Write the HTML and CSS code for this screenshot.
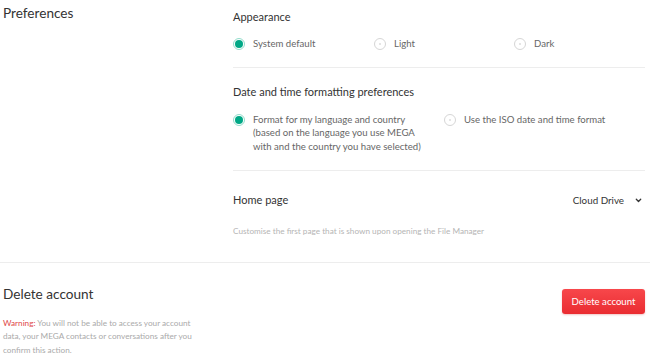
FILE: index.html
```html
<!DOCTYPE html>
<html>
<head>
<meta charset="utf-8">
<link rel="stylesheet" href="styles.css">
</head>
<body>
<div class="page">
  <section class="section prefs">
    <div class="side"><h2 class="side-title">Preferences</h2></div>
    <div class="main">
      <div class="block block-appearance">
        <h3 class="block-title">Appearance</h3>
        <div class="radio-row">
          <label class="radio r1"><span class="dot checked"></span><span class="label">System default</span></label>
          <label class="radio r2"><span class="dot"></span><span class="label">Light</span></label>
          <label class="radio r3"><span class="dot"></span><span class="label">Dark</span></label>
        </div>
      </div>
      <div class="block block-date">
        <h3 class="block-title">Date and time formatting preferences</h3>
        <div class="radio-row date-row">
          <label class="radio d1"><span class="dot checked"></span><span class="label">Format for my language and country<br>(based on the language you use MEGA<br>with and the country you have selected)</span></label>
          <label class="radio d2"><span class="dot"></span><span class="label">Use the ISO date and time format</span></label>
        </div>
      </div>
      <div class="block block-home">
        <div class="home-row">
          <h3 class="block-title">Home page</h3>
          <div class="dropdown"><span>Cloud Drive</span>
            <svg class="chev" width="7" height="5" viewBox="0 0 7 5"><path d="M1.3 1.3 L3.5 3.5 L5.7 1.3" fill="none" stroke="#333" stroke-width="1.3" stroke-linecap="round" stroke-linejoin="round"/></svg>
          </div>
        </div>
        <p class="hint">Customise the first page that is shown upon opening the File Manager</p>
      </div>
    </div>
  </section>
  <section class="section delete">
    <div class="side">
      <h2 class="side-title">Delete account</h2>
      <p class="warn"><span class="warn-label">Warning:</span> You will not be able to access your account data, your MEGA contacts or conversations after you confirm this action.</p>
    </div>
    <div class="main delete-main">
      <button class="btn-delete">Delete account</button>
    </div>
  </section>
</div>
</body>
</html>
```

FILE: styles.css
```css
* { box-sizing: border-box; }
html, body { margin: 0; padding: 0; background: #fff; }
body { font-family: Lato, "Open Sans", sans-serif; color: #333; width: 650px; overflow: hidden; }
.page { padding: 0 5px 0 3px; }
.section { display: flex; }
.side { width: 230px; flex: none; }
.main { flex: 1; }
.side-title { margin: 0; font-size: 13.6px; font-weight: 400; line-height: 20px; color: #333; }
.prefs .side-title { padding-top: 3px; }
.block { border-bottom: 1px solid #ededed; }
.block-title { margin: 0; font-size: 11px; font-weight: 400; line-height: 16px; color: #333; }
.block-appearance { padding: 9px 0 16px; }
.radio-row { display: flex; margin-top: 12px; }
.radio { display: flex; align-items: flex-start; font-size: 9.6px; line-height: 13.5px; color: #666; }
.dot { width: 12px; height: 12px; border-radius: 50%; border: 1px solid #d6d6d6; flex: none; margin: 1px 8px 0 0; position: relative; }
.dot::after { content: ""; position: absolute; left: 4px; top: 4px; width: 2px; height: 2px; border-radius: 50%; background: #ddd; }
.dot.checked { border: 1px solid #93dccb; }
.dot.checked::after { left: 1px; top: 1px; width: 8px; height: 8px; background: #00a886; }
.r1 { width: 141px; }
.r2 { width: 140px; }
.block-date { padding: 16px 0 17px; }
.date-row { margin-top: 13px; }
.d1 { width: 211px; }
.block-home { border-bottom: none; padding: 21px 0 25px; }
.home-row { display: flex; justify-content: space-between; align-items: center; }
.dropdown { display: flex; align-items: center; font-size: 9.8px; color: #333; padding-right: 3px; }
.chev { margin-left: 11px; }
.hint { margin: 17px 0 0; font-size: 8.2px; line-height: 12px; color: #b5b5b5; }
.delete { border-top: 1px solid #ededed; margin: 0 -5px 0 -3px; padding: 21px 5px 0 3px; }
.warn { margin: 13px 0 0; font-size: 8.2px; line-height: 13.3px; color: #aaa; width: 205px; }
.warn-label { color: #e04848; }
.delete-main { display: flex; justify-content: flex-end; align-items: flex-start; padding-top: 5px; }
.btn-delete { font-family: Lato, sans-serif; font-size: 9.6px; color: #fff; border: none; border-radius: 3px; background: linear-gradient(#f7474b, #ea2c31); height: 25px; width: 83px; padding: 0; box-shadow: 0 1px 2px rgba(200,30,30,0.25); }
```
